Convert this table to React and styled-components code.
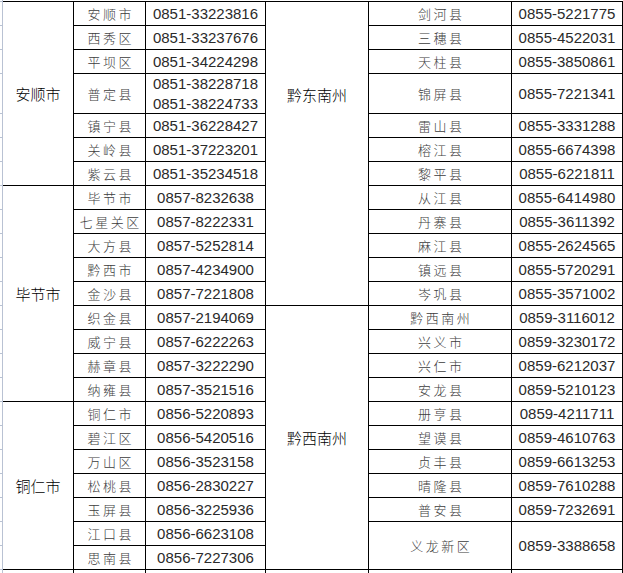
import React from 'react'
import styled, { createGlobalStyle } from 'styled-components'

const GlobalStyle = createGlobalStyle`
  * { box-sizing: border-box; }
  html, body {
    margin: 0;
    padding: 0;
    background: #fff;
    overflow: hidden;
  }
  body {
    width: 623px;
    height: 573px;
    font-family: "Liberation Sans", "Noto Sans CJK SC", sans-serif;
  }
`

const Sheet = styled.div`
  display: flex;
  align-items: flex-start;
  width: 623px;
  height: 573px;
  overflow: hidden;
`

const RowHeads = styled.div`
  display: flex;
  flex-direction: column;
  width: 3px;
  border-right: 1px solid #b9c2d3;
  align-self: stretch;
`

const Tick = styled.div`
  height: ${p => p.$h}px;
  flex: none;
  border-bottom: 1px solid #b9c2d3;
`

const Table = styled.div`
  display: flex;
  flex-direction: column;
  margin-top: 1px;
  border-top: 1px solid #000;
`

const Group = styled.div`
  display: flex;
`

const Label = styled.div`
  width: ${p => p.$w}px;
  flex: none;
  display: flex;
  justify-content: center;
  align-items: ${p => (p.$top != null ? 'flex-start' : 'center')};
  padding-top: ${p => p.$top || 0}px;
  border-right: 1px solid #000;
  border-bottom: 1px solid #000;
  font-family: "Noto Sans CJK SC", sans-serif;
  font-size: 15px;
  font-weight: 300;
  line-height: 20px;
  color: #000;
`

const Rows = styled.div`
  display: flex;
  flex-direction: column;
`

const Row = styled.div`
  display: flex;
  height: ${p => p.$h}px;
`

const County = styled.div`
  width: ${p => p.$w}px;
  flex: none;
  display: flex;
  align-items: center;
  justify-content: center;
  padding-left: 2.5px;
  border-right: 1px solid #000;
  border-bottom: 1px solid #000;
  font-family: "Noto Sans CJK SC", sans-serif;
  font-size: 13px;
  font-weight: 300;
  letter-spacing: 2.5px;
  color: #3c3c3c;
  white-space: nowrap;
`

const Phone = styled.div`
  width: ${p => p.$w}px;
  flex: none;
  display: flex;
  flex-direction: column;
  align-items: center;
  justify-content: center;
  border-right: 1px solid #000;
  border-bottom: 1px solid #000;
  font-family: "Liberation Sans", Arial, sans-serif;
  font-size: 15px;
  line-height: 19.5px;
  color: #2a2a2a;
  white-space: nowrap;
`

const left = [
  {
    name: '安顺市',
    rows: [
      ['安顺市', '0851-33223816'],
      ['西秀区', '0851-33237676'],
      ['平坝区', '0851-34224298'],
      ['普定县', ['0851-38228718', '0851-38224733'], 40],
      ['镇宁县', '0851-36228427'],
      ['关岭县', '0851-37223201'],
      ['紫云县', '0851-35234518'],
    ],
  },
  {
    name: '毕节市',
    rows: [
      ['毕节市', '0857-8232638'],
      ['七星关区', '0857-8222331'],
      ['大方县', '0857-5252814'],
      ['黔西市', '0857-4234900'],
      ['金沙县', '0857-7221808'],
      ['织金县', '0857-2194069'],
      ['威宁县', '0857-6222263'],
      ['赫章县', '0857-3222290'],
      ['纳雍县', '0857-3521516'],
    ],
  },
  {
    name: '铜仁市',
    rows: [
      ['铜仁市', '0856-5220893'],
      ['碧江区', '0856-5420516'],
      ['万山区', '0856-3523158'],
      ['松桃县', '0856-2830227'],
      ['玉屏县', '0856-3225936'],
      ['江口县', '0856-6623108'],
      ['思南县', '0856-7227306'],
    ],
  },
  { name: '', rows: [['', '']] },
]

const right = [
  {
    name: '黔东南州',
    top: 83,
    rows: [
      ['剑河县', '0855-5221775'],
      ['三穗县', '0855-4522031'],
      ['天柱县', '0855-3850861'],
      ['锦屏县', '0855-7221341', 40],
      ['雷山县', '0855-3331288'],
      ['榕江县', '0855-6674398'],
      ['黎平县', '0855-6221811'],
      ['从江县', '0855-6414980'],
      ['丹寨县', '0855-3611392'],
      ['麻江县', '0855-2624565'],
      ['镇远县', '0855-5720291'],
      ['岑巩县', '0855-3571002'],
    ],
  },
  {
    name: '黔西南州',
    rows: [
      ['黔西南州', '0859-3116012'],
      ['兴义市', '0859-3230172'],
      ['兴仁市', '0859-6212037'],
      ['安龙县', '0859-5210123'],
      ['册亨县', '0859-4211711'],
      ['望谟县', '0859-4610763'],
      ['贞丰县', '0859-6613253'],
      ['晴隆县', '0859-7610288'],
      ['普安县', '0859-7232691'],
      ['义龙新区', '0859-3388658', 48],
    ],
  },
  { name: '', rows: [['', '']] },
]

function PhoneTable({ groups, widths }) {
  const [gw, cw, pw] = widths
  return (
    <Table>
      {groups.map((g, i) => (
        <Group key={i}>
          <Label $w={gw} $top={g.top}>{g.name}</Label>
          <Rows>
            {g.rows.map(([county, phone, h], j) => (
              <Row key={j} $h={h || 24}>
                <County $w={cw}>{county}</County>
                <Phone $w={pw}>
                  {[].concat(phone).map(p => <span key={p}>{p}</span>)}
                </Phone>
              </Row>
            ))}
          </Rows>
        </Group>
      ))}
    </Table>
  )
}

export default function App() {
  const ticks = left.flatMap(g => g.rows.map(r => r[2] || 24))
  return (
    <>
      <GlobalStyle />
      <Sheet>
        <RowHeads>
          <Tick $h={2} />
          {ticks.map((h, i) => <Tick key={i} $h={h} />)}
        </RowHeads>
        <PhoneTable groups={left} widths={[71, 72, 120]} />
        <PhoneTable groups={right} widths={[103, 143, 111]} />
      </Sheet>
    </>
  )
}
